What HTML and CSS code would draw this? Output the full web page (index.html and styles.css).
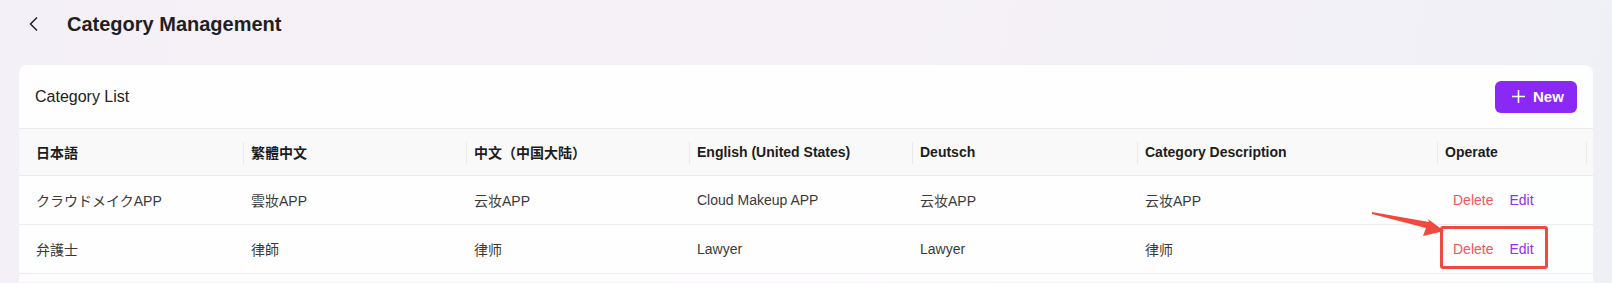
FILE: index.html
```html
<!DOCTYPE html>
<html lang="en">
<head>
    <meta charset="UTF-8">
    <meta name="viewport" content="width=device-width, initial-scale=1.0">
    <title>Category Management</title>
    <link rel="stylesheet" href="styles.css">
</head>
<body>
    <div class="page-head">
        <button class="back-btn">
            <svg width="12" height="16" viewBox="0 0 12 16"><path d="M9 1.5 L2.5 8 L9 14.5" fill="none" stroke="#222" stroke-width="1.5"/></svg>
        </button>
        <h1>Category Management</h1>
    </div>

    <div class="card">
        <div class="card-head">
            <span class="card-title">Category List</span>
            <button class="new-btn">
                <svg width="13" height="13" viewBox="0 0 13 13"><path d="M6.5 0 V13 M0 6.5 H13" stroke="#fff" stroke-width="1.6"/></svg>
                New
            </button>
        </div>

        <table class="cat-table">
            <colgroup>
                <col style="width:224px">
                <col style="width:223px">
                <col style="width:223px">
                <col style="width:223px">
                <col style="width:225px">
                <col style="width:300px">
                <col style="width:149px">
                <col style="width:7px">
            </colgroup>
            <thead>
                <tr>
                    <th class="first">日本語</th>
                    <th>繁體中文</th>
                    <th>中文（中国大陆）</th>
                    <th>English (United States)</th>
                    <th>Deutsch</th>
                    <th>Category Description</th>
                    <th>Operate</th>
                    <th class="gutter"></th>
                </tr>
            </thead>
            <tbody>
                <tr>
                    <td class="first">クラウドメイクAPP</td>
                    <td>雲妝APP</td>
                    <td>云妆APP</td>
                    <td>Cloud Makeup APP</td>
                    <td>云妆APP</td>
                    <td>云妆APP</td>
                    <td class="ops"><button class="del-btn">Delete</button><button class="edit-btn">Edit</button></td>
                    <td></td>
                </tr>
                <tr>
                    <td class="first">弁護士</td>
                    <td>律師</td>
                    <td>律师</td>
                    <td>Lawyer</td>
                    <td>Lawyer</td>
                    <td>律师</td>
                    <td class="ops"><button class="del-btn">Delete</button><button class="edit-btn">Edit</button></td>
                    <td></td>
                </tr>
            </tbody>
        </table>

        <!-- annotation -->
        <svg class="mark-arrow" width="80" height="30" viewBox="0 0 80 30">
            <polygon points="2,2 59,12 58,9 74,21 53,26 56,18 2,4" fill="#ee4a3e"/>
        </svg>
        <div class="mark-box"></div>
    </div>
</body>
</html>
```

FILE: styles.css
```css
body {
    margin: 0;
    padding: 0;
    font-family: "Liberation Sans", Arial, "Noto Sans CJK SC", sans-serif;
    background: linear-gradient(100deg, #f4f0f7 0%, #f5f1f6 55%, #eff0f6 100%);
    color: #333;
    height: 283px;
    overflow: hidden;
}
.page-head {
    display: flex;
    align-items: center;
    height: 48px;
    padding-left: 28px;
    margin-bottom: 17px;
}
.back-btn {
    background: none;
    border: none;
    padding: 0;
    width: 14px;
    height: 20px;
    display: flex;
    align-items: center;
    cursor: pointer;
}
.page-head h1 {
    margin: 0 0 0 25px;
    font-size: 20px;
    font-weight: bold;
    color: #1f1f1f;
}
.card {
    position: relative;
    margin: 0 19px;
    padding-bottom: 8px;
    background: rgba(255, 255, 255, 0.88);
    border-radius: 8px 8px 0 0;
    overflow: hidden;
}
.card-head {
    display: flex;
    align-items: center;
    justify-content: space-between;
    height: 63px;
    padding: 0 16px;
    border-bottom: 1px solid #ececec;
}
.card-title {
    font-size: 16px;
    color: #222;
}
.new-btn {
    display: flex;
    align-items: center;
    gap: 8px;
    height: 32px;
    width: 82px;
    padding: 0 0 0 17px;
    background: #8a28f6;
    color: white;
    border: none;
    border-radius: 6px;
    font-family: inherit;
    font-size: 15px;
    font-weight: bold;
    cursor: pointer;
}
.cat-table {
    width: 100%;
    table-layout: fixed;
    border-collapse: collapse;
    font-size: 14px;
}
.cat-table th {
    position: relative;
    height: 46px;
    padding: 0 8px;
    text-align: left;
    font-weight: bold;
    color: #1d1d1d;
    background: #f9f9fa;
    border-bottom: 1px solid #ececec;
}
.cat-table th + th::before {
    content: "";
    position: absolute;
    left: 0;
    top: 13px;
    width: 1px;
    height: 22px;
    background: #e9e9e9;
}
.cat-table td {
    height: 48px;
    padding: 0 8px;
    color: #3a3a3a;
    border-bottom: 1px solid #ececec;
    white-space: nowrap;
}
.cat-table .first {
    padding-left: 17px;
}
.cat-table .gutter {
    padding: 0;
}
.cat-table td.ops {
    padding: 0;
}
.ops button {
    background: none;
    border: none;
    padding: 0 8px;
    font-family: inherit;
    font-size: 14px;
    cursor: pointer;
}
.ops button:first-child {
    margin-left: 8px;
}
.del-btn {
    color: #f5535c;
}
.edit-btn {
    color: #8f2ff5;
}
.mark-box {
    position: absolute;
    left: 1421px;
    top: 161px;
    width: 102px;
    height: 37px;
    border: 3px solid #ee4a3e;
    border-radius: 3px;
}
.mark-arrow {
    position: absolute;
    left: 1351px;
    top: 145px;
}
```
